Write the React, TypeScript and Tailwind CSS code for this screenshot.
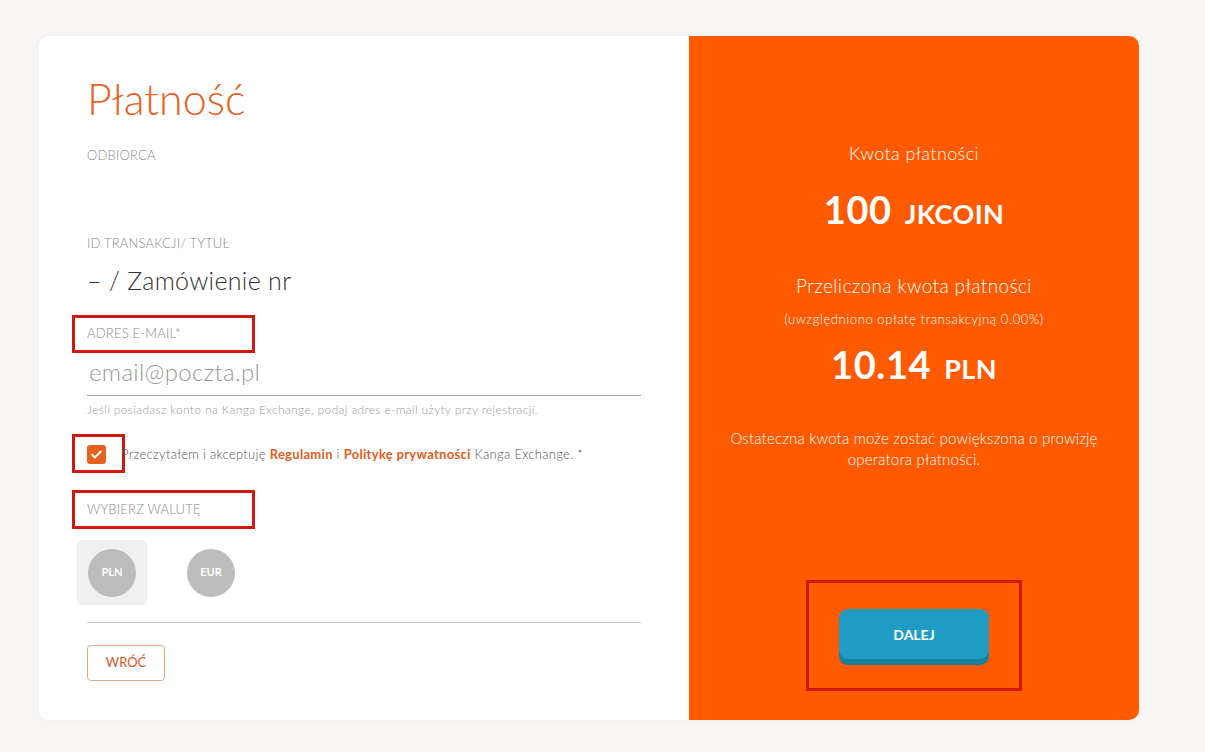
import { useState } from "react";

const font = { fontFamily: "Lato, 'Open Sans', 'Noto Sans', sans-serif" };

function Annot({ children, className = "" }: { children: React.ReactNode; className?: string }) {
  return <div className={`border-[3px] border-[#d0180f] ${className}`}>{children}</div>;
}

export default function App() {
  const [checked, setChecked] = useState(true);
  const [currency, setCurrency] = useState("PLN");

  return (
    <div className="min-h-[752px] w-full bg-[#f7f6f4] pt-[36px]" style={font}>
      <div className="ml-[39px] flex h-[684px] w-[1100px] overflow-hidden rounded-[10px] shadow-[0_0_6px_rgba(0,0,0,0.04)]">
        {/* left */}
        <div className="flex w-[650px] flex-col bg-white pl-[48px] pr-[48px]">
          <h1 className="mt-[39px] text-[43px] font-light leading-[48px] text-[#e8621f]">Płatność</h1>
          <div className="mt-[24px] text-[13px] font-light leading-[16px] tracking-[0.2px] text-[#8a8a8a]">ODBIORCA</div>
          <div className="mt-[72px] text-[13px] font-light leading-[16px] tracking-[0.2px] text-[#8a8a8a]">ID TRANSAKCJI/ TYTUŁ</div>
          <div className="mt-[14px] text-[25px] font-light leading-[30px] tracking-[0.3px] text-[#333]">– / Zamówienie nr</div>

          <Annot className="-ml-[15px] mt-[20px] flex h-[38px] w-[183px] shrink-0 items-center pl-[12px]">
            <span className="text-[13px] font-light tracking-[0.2px] text-[#8a8a8a]">ADRES E-MAIL*</span>
          </Annot>
          <input
            className="mt-0 h-[43px] w-[554px] shrink-0 border-b border-[#a8a8a8] pb-[6px] pl-[2px] text-[24px] font-light tracking-[0.3px] text-[#999] outline-none placeholder:text-[#9a9a9a]"
            placeholder="email@poczta.pl"
          />
          <div className="mt-[7px] text-[12px] font-light leading-[14px] tracking-[0.35px] text-[#9a9a9a]">
            Jeśli posiadasz konto na Kanga Exchange, podaj adres e-mail użyty przy rejestracji.
          </div>

          <div className="mt-[17px] flex shrink-0 items-center">
            <Annot className="-ml-[15px] flex h-[39px] w-[53px] shrink-0 items-center pl-[12px] pt-[2px]">
              <button
                onClick={() => setChecked(!checked)}
                className="flex h-[19px] w-[19px] items-center justify-center rounded-[3px] bg-[#e8621f]"
              >
                {checked && (
                  <svg width="13" height="13" viewBox="0 0 24 24" fill="none" stroke="white" strokeWidth="3.5" strokeLinecap="round" strokeLinejoin="round">
                    <path d="M4 12.5l5 5L20 6.5" />
                  </svg>
                )}
              </button>
            </Annot>
            <span className="-ml-[4px] pt-[2px] text-[13px] font-light tracking-[0.3px] text-[#555]">
              Przeczytałem i akceptuję <span className="font-bold text-[#e0601c]">Regulamin</span> i{" "}
              <span className="font-bold text-[#e0601c]">Politykę prywatności</span> Kanga Exchange. *
            </span>
          </div>

          <Annot className="-ml-[15px] mt-[17px] flex h-[39px] w-[183px] shrink-0 items-center pl-[12px]">
            <span className="text-[13px] font-light tracking-[0.2px] text-[#8a8a8a]">WYBIERZ WALUTĘ</span>
          </Annot>

          <div className="-ml-[10px] mt-[11px] flex shrink-0 gap-[29px]">
            {["PLN", "EUR"].map((c) => (
              <button
                key={c}
                onClick={() => setCurrency(c)}
                className={`flex h-[65px] w-[70px] items-center justify-center rounded-[5px] ${currency === c ? "bg-[#f0f0f0]" : ""}`}
              >
                <span className="flex h-[48px] w-[48px] items-center justify-center rounded-full bg-[#bdbdbd] text-[11px] font-bold text-white">
                  {c}
                </span>
              </button>
            ))}
          </div>

          <div className="mt-[17px] h-px w-[554px] shrink-0 bg-[#c4c4c4]" />

          <button className="mt-[22px] h-[36px] w-[78px] shrink-0 rounded-[4px] border border-[#e8a580] text-[13px] text-[#d8581a]">
            WRÓĆ
          </button>
        </div>

        {/* right */}
        <div className="flex flex-1 flex-col items-center bg-[#ff5a00] text-white">
          <div className="mt-[106px] text-[18px] font-light leading-[22px] tracking-[0.4px]">Kwota płatności</div>
          <div className="mt-[23px] flex items-baseline gap-[13px] font-bold leading-[44px]">
            <span className="text-[38px] tracking-[0.6px]">100</span>
            <span className="text-[27px] tracking-[0.4px]">JKCOIN</span>
          </div>
          <div className="mt-[39px] text-[19px] font-light leading-[22px] tracking-[0.4px]">Przeliczona kwota płatności</div>
          <div className="mt-[14px] text-[13px] font-light leading-[16px] tracking-[0.6px]">(uwzględniono opłatę transakcyjną 0.00%)</div>
          <div className="mt-[15px] flex items-baseline gap-[13px] font-bold leading-[44px]">
            <span className="text-[38px] tracking-[0.6px]">10.14</span>
            <span className="text-[27px] tracking-[0.4px]">PLN</span>
          </div>
          <div className="mt-[37px] w-[390px] text-center text-[15px] font-light leading-[21px] tracking-[0.2px]">
            Ostateczna kwota może zostać powiększona o prowizję operatora płatności.
          </div>

          <Annot className="mt-[110px] flex h-[111px] w-[216px] shrink-0 items-center justify-center pt-[2px]">
            <button className="h-[56px] w-[150px] rounded-[9px] bg-[#1e9cc4] pb-[5px] text-[14px] font-bold text-white shadow-[inset_0_-6px_0_#177f9f]">
              DALEJ
            </button>
          </Annot>
        </div>
      </div>
    </div>
  );
}
